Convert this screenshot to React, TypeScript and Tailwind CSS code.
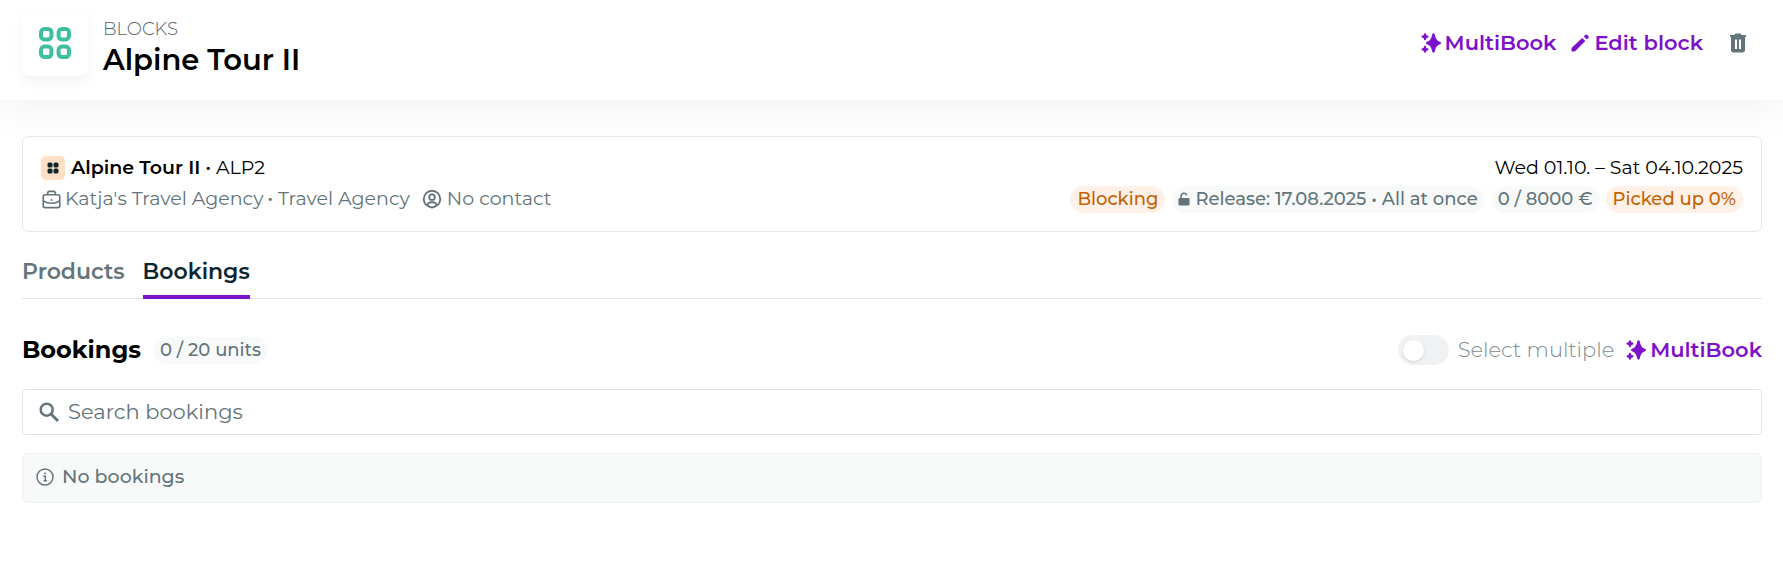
import React from 'react';
import { BiUserCircle } from 'react-icons/bi';

interface IconProps {
  className?: string;
}

const BlocksIcon: React.FC<IconProps> = ({ className }) => (
  <svg viewBox="0 0 32 32" className={className} fill="none" stroke="currentColor" strokeWidth="4" aria-hidden="true">
    <rect x="2" y="2" width="10.4" height="10.4" rx="3.4" />
    <rect x="19.6" y="2" width="10.4" height="10.4" rx="3.4" />
    <rect x="2" y="19.6" width="10.4" height="10.4" rx="3.4" />
    <rect x="19.6" y="19.6" width="10.4" height="10.4" rx="3.4" />
  </svg>
);

const DotsIcon: React.FC<IconProps> = ({ className }) => (
  <svg viewBox="0 0 12 12" className={className} fill="currentColor" aria-hidden="true">
    <rect x="0.5" y="0.5" width="5" height="5" rx="1.6" />
    <rect x="6.5" y="0.5" width="5" height="5" rx="1.6" />
    <rect x="0.5" y="6.5" width="5" height="5" rx="1.6" />
    <rect x="6.5" y="6.5" width="5" height="5" rx="1.6" />
  </svg>
);

const SparkleIcon: React.FC<IconProps> = ({ className }) => (
  <svg viewBox="0 0 20 20" className={className} fill="currentColor" aria-hidden="true">
    <path d="M12.5.3c.7 0 1.100.4 1.300 1.100.9 4 1.700 5.900 5.200 7.300.6.300 1 .7 1 1.300s-.4 1-1 1.300c-3.500 1.400-4.300 3.300-5.200 7.300-.2.700-.6 1.100-1.300 1.100s-1.100-.4-1.300-1.100c-.9-4-1.700-5.900-5.200-7.300-.6-.3-1-.7-1-1.300s.4-1 1-1.300c3.500-1.400 4.300-3.300 5.200-7.300.2-.7.600-1.100 1.300-1.100z" />
    <path d="M4 .2c.6 0 1 .4 1.100 1l.3 1.100 1.100.3c.6.100 1 .5 1 1.100s-.4 1-1 1.100l-1.100.3-.3 1.100c-.1.600-.5 1-1.100 1s-1-.4-1.100-1l-.3-1.100-1.100-.3c-.6-.1-1-.5-1-1.100s.4-1 1-1.100l1.100-.3.3-1.100c.1-.6.5-1 1.100-1z" />
    <path d="M4 12.800c.6 0 1 .4 1.100 1l.3 1.100 1.100.3c.6.100 1 .5 1 1.100s-.4 1-1 1.100l-1.100.3-.3 1.100c-.1.600-.5 1-1.100 1s-1-.4-1.100-1l-.3-1.100-1.100-.3c-.6-.1-1-.5-1-1.100s.4-1 1-1.100l1.100-.3.3-1.100c.1-.6.5-1 1.100-1z" />
  </svg>
);

const PencilIcon: React.FC<IconProps> = ({ className }) => (
  <svg viewBox="0 0 20 20" className={className} fill="currentColor" aria-hidden="true">
    <path d="M12.200 5 15.300 8.100 5.900 17.500c-.8.800-1.400 1-2.200 1H2.300c-.5 0-.8-.3-.8-.8v-1.400c0-.8.2-1.400 1-2.200z" />
    <path d="M13.800 3.400l1.300-1.300c.7-.7 1.500-.7 2.200 0l.9.900c.7.700.7 1.500 0 2.200l-1.300 1.300z" />
  </svg>
);

const TrashIcon: React.FC<IconProps> = ({ className }) => (
  <svg viewBox="0 0 18 20" className={className} fill="currentColor" aria-hidden="true">
    <path
      fillRule="evenodd"
      d="M6.500.5h5l1.300 1.500H16c.8 0 1.200.4 1.200 1s-.4 1-1.200 1v13c0 1.600-1 2.500-2.500 2.500h-9C3 19.500 2 18.600 2 17V4C1.200 4 .8 3.600.8 3S1.200 2 2 2h3.200zM6 6.500v9.500h2V6.500zm4 0v9.500h2V6.500z"
    />
  </svg>
);

const BriefcaseIcon: React.FC<IconProps> = ({ className }) => (
  <svg viewBox="0 0 20 20" className={className} fill="none" stroke="currentColor" strokeWidth="1.700" aria-hidden="true">
    <rect x="1.300" y="5" width="17.400" height="13.500" rx="2" />
    <path d="M6 5V3.300C6 2.200 6.700 1.500 7.800 1.500h4.400c1.100 0 1.800.7 1.800 1.800V5M1.500 11.500C4 13.200 7 14 10 14s6-.8 8.500-2.500" />
    <circle cx="10" cy="10.500" r="1" fill="currentColor" stroke="none" />
  </svg>
);

const LockIcon: React.FC<IconProps> = ({ className }) => (
  <svg viewBox="0 0 12 14" className={className} fill="currentColor" aria-hidden="true">
    <rect x="0.500" y="6" width="11" height="7.500" rx="1.300" />
    <path d="M3 6.500V4.200a3 3 0 0 1 5.800-1" fill="none" stroke="currentColor" strokeWidth="1.500" />
  </svg>
);

const SearchIcon: React.FC<IconProps> = ({ className }) => (
  <svg viewBox="0 0 20 20" className={className} fill="none" stroke="currentColor" strokeWidth="2.500" aria-hidden="true">
    <circle cx="7.700" cy="7.700" r="6" />
    <path d="M12 12l7 7" strokeWidth="2.800" />
  </svg>
);

const InfoIcon: React.FC<IconProps> = ({ className }) => (
  <svg viewBox="0 0 18 18" className={className} fill="none" stroke="currentColor" strokeWidth="1.500" aria-hidden="true">
    <circle cx="9" cy="9" r="8" />
    <path d="M7.300 8.300h2v4.200M7.500 12.800h3.500" />
    <circle cx="9" cy="5.500" r="1" fill="currentColor" stroke="none" />
  </svg>
);

interface PillProps {
  tone?: 'neutral' | 'warning';
  children: React.ReactNode;
}

const Pill: React.FC<PillProps> = ({ tone = 'neutral', children }) => (
  <span
    className={`inline-flex items-center rounded-full px-[7px] h-[27px] text-[18px] font-medium whitespace-nowrap ${
      tone === 'warning' ? 'bg-[#fff1e8] text-[#c46200]' : 'bg-[#f8faf9] text-[#63747b]'
    }`}
  >
    {children}
  </span>
);

const MultiBookButton: React.FC = () => (
  <button className="flex items-center gap-1 text-[21px] font-semibold text-[#7d12cb]">
    <SparkleIcon className="size-5" />
    MultiBook
  </button>
);

export default function App() {
  return (
    <div className="bg-white text-black font-[Montserrat,Inter,sans-serif]">
      <header className="relative h-[100px] flex justify-between px-[22px] bg-white shadow-[0_8px_36px_rgba(70,90,95,0.08)]">
        <div className="flex items-start gap-[15px] pt-[10px]">
          <div className="size-[66px] rounded-lg bg-white flex items-center justify-center shadow-[0_6px_12px_rgba(70,90,95,0.07)]">
            <BlocksIcon className="size-8 text-[#3ebf9f]" />
          </div>
          <div className="pt-1">
            <div className="text-[18px] leading-[30px] font-light text-[#4f626a]">BLOCKS</div>
            <h1 className="text-[29px] leading-[32px] font-semibold">Alpine Tour II</h1>
          </div>
        </div>
        <div className="flex items-center h-[86px] pr-[14px]">
          <MultiBookButton />
          <button className="ml-[14px] flex items-center gap-1 text-[21px] font-semibold text-[#7d12cb]">
            <PencilIcon className="size-5" />
            Edit block
          </button>
          <button aria-label="Delete block" className="ml-[26px] text-[#63747b]">
            <TrashIcon className="w-[18px] h-5" />
          </button>
        </div>
      </header>

      <main className="pl-[22px] pr-[21px] pt-9">
        <section className="relative h-24 flex justify-between px-[18px] pt-4 border border-[#e5e7e8] rounded-md bg-white">
          <div>
            <div className="flex items-center h-[30px] gap-[6px] text-[19px]">
              <span className="w-6 h-6 rounded-[5px] bg-[#ffe0c7] text-[#0c262f] flex items-center justify-center">
                <DotsIcon className="size-3" />
              </span>
              <span>
                <strong className="font-semibold">Alpine Tour II ·</strong> ALP2
              </span>
            </div>
            <div className="flex items-center h-8 text-[19px] text-[#63747b]">
              <BriefcaseIcon className="size-[19px] ml-px mr-1" />
              <span>Katja's Travel Agency<strong className="ml-1 font-semibold">·</strong> Travel Agency</span>
              <BiUserCircle className="size-[22px] ml-[11px] mr-1" />
              <span>No contact</span>
            </div>
          </div>
          <div className="flex flex-col items-end">
            <div className="flex items-center h-[30px] text-[19px]">Wed 01.10. – Sat 04.10.2025</div>
            <div className="flex items-center h-8 gap-[6px]">
              <Pill tone="warning">Blocking</Pill>
              <Pill>
                <LockIcon className="w-3 h-[14px] mr-[5px]" />
                Release: 17.08.2025 • All at once
              </Pill>
              <Pill>0 / 8000 €</Pill>
              <Pill tone="warning">Picked up 0%</Pill>
            </div>
          </div>
        </section>

        <nav className="mt-4 flex gap-[18px] h-[51px] border-b border-[#e5e7e8] text-[22px] font-semibold">
          <a href="#products" className="flex items-center pb-[3px] text-[#63747b]">Products</a>
          <a href="#bookings" aria-current="page" className="flex items-center -mb-px border-b-4 border-[#7d12cb] text-[#0c262f]">Bookings</a>
        </nav>

        <div className="mt-9 flex items-center justify-between h-[30px]">
          <div className="flex items-center gap-3">
            <h2 className="text-[24px] font-bold">Bookings</h2>
            <Pill>0 / 20 units</Pill>
          </div>
          <div className="flex items-center gap-3">
            <label className="flex items-center gap-[9px] text-[21px] font-light text-[#7e8c92]">
              <input
                type="checkbox"
                role="switch"
                className="appearance-none w-[51px] h-[30px] rounded-full bg-[#eff1f2] p-[5px] before:block before:size-[21px] before:rounded-full before:bg-white before:shadow-[0_1px_3px_rgba(0,0,0,0.12)] checked:bg-[#7d12cb] checked:before:ml-5"
              />
              Select multiple
            </label>
            <MultiBookButton />
          </div>
        </div>

        <label className="mt-6 flex items-center gap-[9px] h-[46px] px-4 border border-[#e1e4e5] rounded-[4px] text-[#63747b]">
          <SearchIcon className="size-5" />
          <input
            type="search"
            aria-label="Search bookings"
            placeholder="Search bookings"
            className="flex-1 text-[21px] outline-none placeholder:text-[#63747b]"
          />
        </label>

        <div className="mt-[18px] flex items-center gap-2 h-[50px] px-[13px] pb-0.5 border border-[#eef1f1] rounded-md bg-[#f8faf9] text-[19px] font-medium text-[#63747b]">
          <InfoIcon className="size-[18px]" />
          No bookings
        </div>
      </main>
    </div>
  );
}
